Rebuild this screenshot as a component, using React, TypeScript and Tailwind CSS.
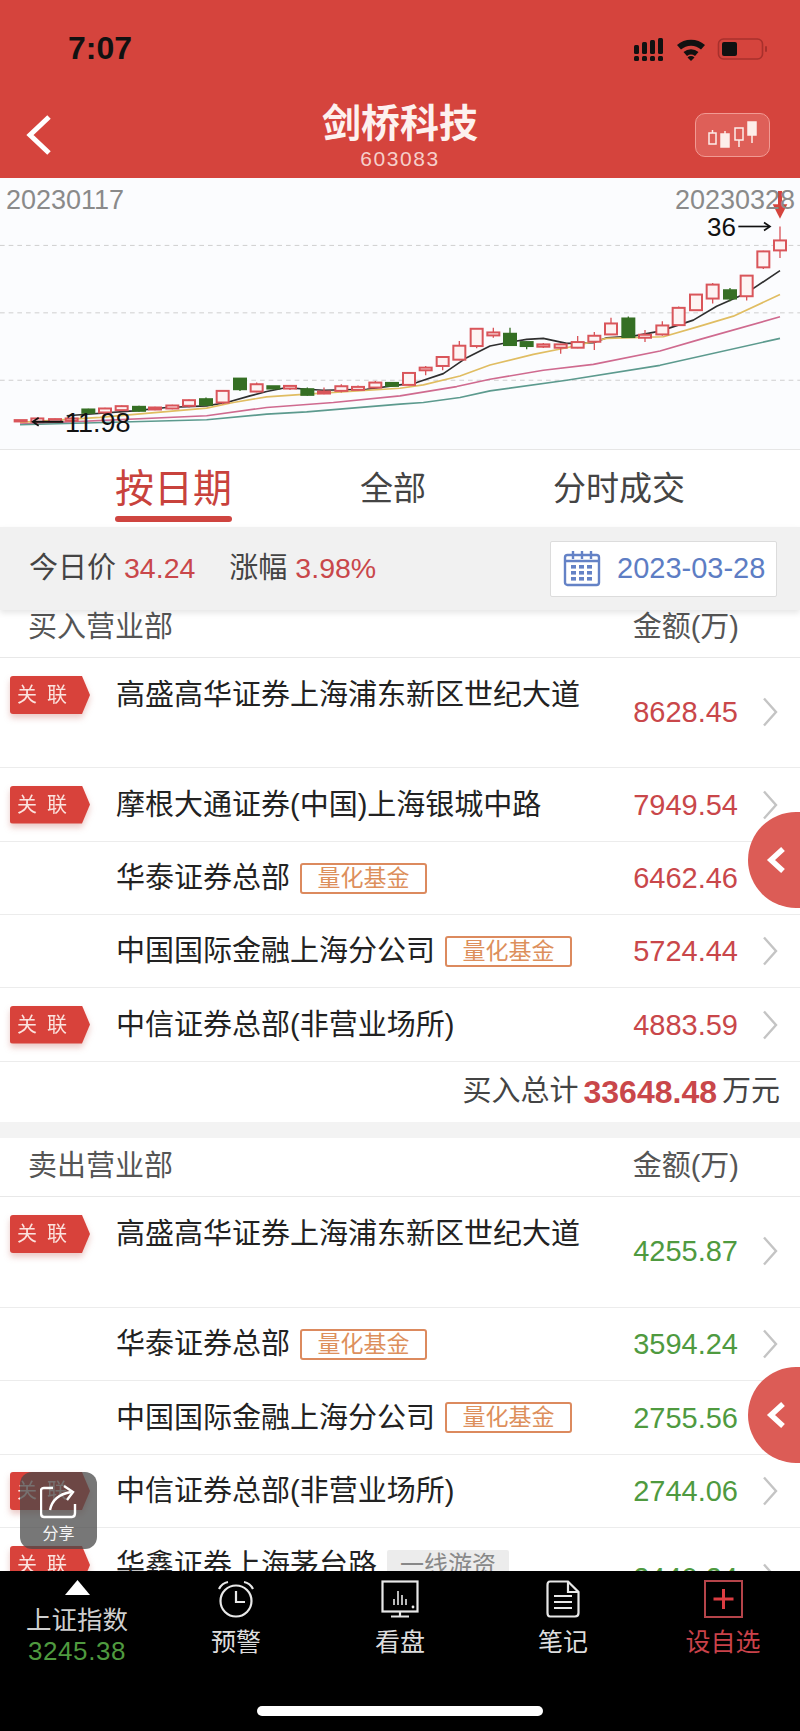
import React from "react";

const FONT = '"Liberation Sans", "Noto Sans CJK SC", sans-serif';

type Candle = [number, number, number, number, number, "r" | "g"];

// x, body top, body bottom, wick top, wick bottom, colour (chart units: 3 per px)
const CANDLES: Candle[] = [
  [62, 738, 742, 738, 742, "r"],
  [112, 733, 743, 731, 748, "r"],
  [165, 735, 742, 733, 744, "r"],
  [215, 733, 740, 731, 742, "r"],
  [265, 706, 716, 704, 718, "g"],
  [315, 703, 715, 701, 718, "r"],
  [365, 696, 708, 694, 710, "r"],
  [417, 698, 710, 695, 713, "g"],
  [465, 700, 706, 698, 708, "r"],
  [517, 694, 703, 692, 705, "r"],
  [567, 678, 695, 676, 700, "r"],
  [618, 675, 692, 670, 694, "g"],
  [668, 650, 685, 648, 690, "r"],
  [720, 613, 645, 611, 650, "g"],
  [770, 630, 652, 625, 654, "r"],
  [820, 636, 643, 635, 646, "g"],
  [870, 635, 643, 632, 647, "r"],
  [922, 645, 662, 640, 665, "g"],
  [972, 652, 658, 640, 660, "r"],
  [1024, 636, 650, 630, 655, "r"],
  [1074, 638, 647, 634, 649, "r"],
  [1126, 625, 640, 620, 642, "r"],
  [1176, 626, 635, 623, 637, "g"],
  [1227, 596, 632, 594, 634, "r"],
  [1277, 580, 588, 575, 603, "r"],
  [1328, 548, 575, 546, 588, "r"],
  [1378, 514, 556, 500, 558, "r"],
  [1430, 463, 515, 461, 522, "r"],
  [1480, 474, 483, 460, 490, "r"],
  [1530, 478, 512, 460, 514, "g"],
  [1580, 503, 515, 501, 525, "g"],
  [1630, 510, 517, 506, 521, "r"],
  [1682, 510, 520, 508, 538, "r"],
  [1733, 503, 520, 485, 522, "r"],
  [1783, 484, 502, 473, 527, "r"],
  [1833, 447, 480, 430, 482, "r"],
  [1885, 432, 488, 426, 490, "g"],
  [1935, 481, 490, 467, 503, "r"],
  [1987, 453, 480, 440, 484, "r"],
  [2036, 400, 452, 396, 454, "r"],
  [2088, 360, 407, 358, 409, "r"],
  [2138, 330, 372, 325, 387, "r"],
  [2190, 347, 372, 340, 380, "g"],
  [2240, 303, 365, 301, 378, "r"],
  [2290, 230, 278, 228, 283, "r"],
  [2340, 197, 227, 155, 250, "r"],
];

const MA_LINES: { color: string; points: string }[] = [
  {
    color: "#2f2f2f",
    points:
      "200,725 400,710 500,700 620,695 680,685 750,665 800,652 860,640 920,645 970,648 1100,645 1200,632 1250,625 1330,598 1400,550 1470,515 1520,505 1580,495 1630,492 1700,507 1780,505 1820,490 1900,485 1980,470 2080,437 2150,395 2240,355 2340,288",
  },
  {
    color: "#e0bd62",
    points:
      "60,745 300,730 620,702 700,685 800,668 920,660 1200,642 1270,632 1380,605 1470,572 1600,540 1700,520 1820,492 1990,487 2100,455 2200,425 2340,360",
  },
  {
    color: "#cf6a8f",
    points:
      "60,750 620,725 800,700 1000,685 1200,665 1370,637 1470,615 1630,588 1780,570 1980,530 2100,495 2340,427",
  },
  {
    color: "#5c9a8e",
    points:
      "60,752 620,737 800,720 920,713 1200,690 1270,685 1380,670 1470,650 1700,618 1980,573 2340,492",
  },
];

function KLine() {
  return (
    <svg className="absolute inset-0 h-full w-full" viewBox="0 9 2400 816" preserveAspectRatio="none">
      {[212, 415, 618].map((y) => (
        <line key={y} x1="0" x2="2400" y1={y} y2={y} stroke="#cfcfcf" strokeWidth="3" strokeDasharray="14 12" />
      ))}
      {MA_LINES.map((l) => (
        <polyline key={l.color} points={l.points} fill="none" stroke={l.color} strokeWidth="5" strokeLinejoin="round" />
      ))}
      {CANDLES.map(([x, top, bottom, wickTop, wickBottom, c]) => {
        const color = c === "r" ? "#d9555a" : "#356f24";
        return (
          <g key={x}>
            <line x1={x} x2={x} y1={wickTop} y2={wickBottom} stroke={color} strokeWidth="4" />
            <rect
              x={x - 18}
              y={top}
              width="36"
              height={bottom - top}
              fill={c === "r" ? "#fdf3f3" : color}
              stroke={color}
              strokeWidth="6"
            />
          </g>
        );
      })}
      {/* price markers */}
      <line x1="100" x2="190" y1="743" y2="743" stroke="#111" strokeWidth="6" />
      <polyline points="116,731 98,743 116,755" fill="none" stroke="#111" strokeWidth="5" />
      <line x1="2215" x2="2308" y1="155" y2="155" stroke="#111" strokeWidth="5" />
      <polyline points="2292,143 2310,155 2292,167" fill="none" stroke="#111" strokeWidth="5" />
      <line x1="2340" x2="2340" y1="48" y2="110" stroke="#d5443d" strokeWidth="12" />
      <polygon points="2318,88 2362,88 2340,132" fill="#d5443d" />
    </svg>
  );
}

function Chevron({ className }: { className: string }) {
  return (
    <svg className={className} viewBox="0 0 16 30" fill="none">
      <polyline points="2,1.5 14,15 2,28.5" stroke="#c4c4c4" strokeWidth="2.4" />
    </svg>
  );
}

function LinkBadge() {
  return (
    <div className="h-[38px] w-[80px] drop-shadow-[0_4px_3px_rgba(180,60,50,0.28)]">
      <div className="flex h-full w-full items-center rounded-l-[3px] bg-[#d8423b] pl-[7px] text-[20px] leading-none text-[#fbe3df] [clip-path:polygon(0_0,90%_0,100%_50%,90%_100%,0_100%)]">
        <span>关</span>
        <span className="ml-[10px]">联</span>
      </div>
    </div>
  );
}

function QuantTag() {
  return (
    <span className="flex h-[31px] w-[127px] shrink-0 items-center justify-center rounded-[3px] border-2 border-[#dc8a5e] text-[23px] leading-none text-[#dd8f5c]">
      量化基金
    </span>
  );
}

function HotMoneyTag() {
  return (
    <span className="flex h-[31px] w-[122px] shrink-0 items-center justify-center rounded-[2px] bg-[#ececec] text-[24px] leading-none text-[#888]">
      一线游资
    </span>
  );
}

type RowProps = {
  name: string;
  value: string;
  color: string;
  badge?: boolean;
  tag?: React.ReactNode;
  tall?: string;
  height?: string;
  valueTop?: string;
  chevronTop?: string;
};

function Row({
  name,
  value,
  color,
  badge,
  tag,
  tall,
  height = "h-[73px]",
  valueTop = "pt-[36px]",
  chevronTop = "mt-[39px]",
}: RowProps) {
  if (tall) {
    return (
      <div className={`flex ${tall} items-start border-b border-[#ececec]`}>
        <div className="w-[116px] shrink-0 pl-[10px] pt-[18px]">{badge && <LinkBadge />}</div>
        <div className="flex flex-1 items-center gap-[10px] pt-[16px] text-[29px] leading-[42px] text-[#222]">
          <span>{name}</span>
          {tag}
        </div>
        <div className={`${valueTop} text-[29px] leading-[36px] ${color}`}>{value}</div>
        <Chevron className={`ml-[24px] mr-[22px] ${chevronTop} h-[30px] w-[16px] shrink-0`} />
      </div>
    );
  }
  return (
    <div className={`flex ${height} items-center border-b border-[#ececec]`}>
      <div className="w-[116px] shrink-0 pl-[10px]">{badge && <LinkBadge />}</div>
      <div className="flex flex-1 items-center gap-[10px] text-[29px] leading-[42px] text-[#222]">
        <span>{name}</span>
        {tag}
      </div>
      <div className={`text-[29px] leading-[36px] ${color}`}>{value}</div>
      <Chevron className="ml-[24px] mr-[22px] h-[30px] w-[16px] shrink-0" />
    </div>
  );
}

function SectionHead({ title, className }: { title: string; className: string }) {
  return (
    <div className={`flex items-center justify-between border-b border-[#e8e8e8] pl-[28px] pr-[61px] text-[29px] text-[#555] ${className}`}>
      <span>{title}</span>
      <span>金额(万)</span>
    </div>
  );
}

function SideTab({ className }: { className: string }) {
  return (
    <div className={`absolute right-0 flex h-[96px] w-[52px] items-center rounded-l-full bg-[#dc5c56] pl-[18px] ${className}`}>
      <svg className="h-[28px] w-[20px]" viewBox="0 0 20 28" fill="none">
        <polyline points="17,3 5,14 17,25" stroke="#fff" strokeWidth="5.5" />
      </svg>
    </div>
  );
}

function TabItem({ label, children, color = "text-[#dedede]", width }: { label: string; children: React.ReactNode; color?: string; width: string }) {
  return (
    <div className={`flex flex-col items-center ${width}`}>
      <div className="flex h-[38px] items-center">{children}</div>
      <div className={`mt-[9px] text-[25px] leading-[30px] ${color}`}>{label}</div>
    </div>
  );
}

export default function App() {
  const red = "text-[#c9474a]";
  const green = "text-[#4f9a3f]";
  return (
    <div className="relative flex h-[1731px] w-[800px] flex-col overflow-hidden bg-white" style={{ fontFamily: FONT }}>
      {/* header */}
      <header className="h-[178px] shrink-0 bg-[#d5443d]">
        <div className="flex h-[95px] items-center justify-between pl-[68px] pr-[32px]">
          <span className="text-[32px] font-bold leading-none text-[#111]">7:07</span>
          <svg className="h-[26px] w-[135px]" viewBox="0 0 135 26">
            {[[1, 10], [9, 7], [17, 5], [25, 3]].map(([x, top]) => (
              <g key={x} fill="#111">
                <rect x={x} y={top} width="5" height={19 - top} rx="1.5" />
                <rect x={x} y="21" width="5" height="5" rx="1.5" />
              </g>
            ))}
            <path d="M44 10 A21 21 0 0 1 72 10 L68 14.5 A15 15 0 0 0 48 14.5 Z" fill="#111" />
            <path d="M50.5 17 A12 12 0 0 1 65.5 17 L62 21 A7 7 0 0 0 54 21 Z" fill="#111" />
            <path d="M58 26 L54.5 22.5 A5 5 0 0 1 61.5 22.5 Z" fill="#111" />
            <rect x="85.5" y="4" width="44" height="20" rx="5" fill="none" stroke="#a8302c" strokeWidth="1.6" />
            <rect x="89" y="7" width="15" height="14" rx="2" fill="#111" />
            <rect x="132" y="11" width="2" height="6" rx="1" fill="#a8302c" />
          </svg>
        </div>
        <div className="flex">
          <div className="w-[120px] pl-[25px] pt-[20px]">
            <svg className="h-[40px] w-[27px]" viewBox="0 0 27 40" fill="none">
              <polyline points="24,2 5,20 24,38" stroke="#fff" strokeWidth="5" />
            </svg>
          </div>
          <div className="flex flex-1 flex-col items-center pt-[9px]">
            <div className="text-[39px] font-bold leading-[40px] text-[#fdf1ef]">剑桥科技</div>
            <div className="mt-[3px] text-[21px] leading-[24px] tracking-[1.6px] text-[#f6cfca]">603083</div>
          </div>
          <div className="flex w-[120px] justify-end pr-[30px] pt-[18px]">
            <div className="flex h-[44px] w-[75px] items-center justify-center rounded-[10px] border border-[#f19a93] bg-[#de5f58]">
              <svg className="h-[30px] w-[52px]" viewBox="0 0 52 30" fill="none" stroke="#fdeeea" strokeWidth="1.5">
                <rect x="2" y="13" width="7" height="11" />
                <line x1="5.5" x2="5.5" y1="10" y2="13" />
                <rect x="14" y="14" width="8" height="13" fill="#fdeeea" />
                <line x1="18" x2="18" y1="11" y2="14" />
                <rect x="28" y="8" width="8" height="12" />
                <line x1="32" x2="32" y1="20" y2="27" />
                <rect x="41" y="2" width="8" height="13" fill="#fdeeea" />
                <line x1="45" x2="45" y1="15" y2="23" />
              </svg>
            </div>
          </div>
        </div>
      </header>

      {/* kline chart */}
      <section className="relative h-[272px] shrink-0 border-b border-[#e6e6e6] bg-[#fbfcfe]">
        <KLine />
        <span className="absolute left-[6px] top-[6px] text-[27px] leading-[32px] text-[#8a8a8a]">20230117</span>
        <span className="absolute left-[675px] top-[6px] text-[27px] leading-[32px] text-[#8a8a8a]">20230328</span>
        <span className="absolute left-[707px] top-[33px] text-[26px] leading-[32px] text-[#111]">36</span>
        <span className="absolute left-[65px] top-[229px] text-[27px] leading-[32px] text-[#111]">11.98</span>
      </section>

      {/* view switch */}
      <nav className="flex h-[77px] shrink-0 items-start bg-white">
        <div className="ml-[115px] flex flex-col items-center pt-[16px]">
          <span className="text-[39px] leading-[46px] text-[#c8423c]">按日期</span>
          <span className="mt-[4px] h-[6px] w-[117px] rounded-full bg-[#cf4540]" />
        </div>
        <span className="ml-[128px] pt-[19px] text-[33px] leading-[40px] text-[#444]">全部</span>
        <span className="ml-[127px] pt-[19px] text-[33px] leading-[40px] text-[#444]">分时成交</span>
      </nav>

      {/* quote and date */}
      <div className="relative z-10 flex h-[83px] shrink-0 items-center bg-[#f1f1f1] pl-[29px] pr-[23px] text-[29px] shadow-[0_3px_6px_rgba(0,0,0,0.1)]">
        <span className="text-[#444]">今日价</span>
        <span className={`ml-[8px] text-[28.5px] ${red}`}>34.24</span>
        <span className="ml-[34px] text-[#444]">涨幅</span>
        <span className={`ml-[8px] text-[28.5px] ${red}`}>3.98%</span>
        <div className="ml-auto flex h-[56px] w-[227px] items-center rounded-[2px] border border-[#dcdcdc] bg-white pl-[12px] text-[29px] text-[#5d7dc4]">
          <svg className="h-[37px] w-[38px] shrink-0" viewBox="0 0 38 37" fill="none" stroke="#6482c6" strokeWidth="2.4">
            <rect x="2" y="5" width="34" height="30" rx="2.5" />
            <line x1="2" x2="36" y1="11" y2="11" />
            <line x1="10" x2="10" y1="1" y2="9" />
            <line x1="19" x2="19" y1="1" y2="9" />
            <line x1="28" x2="28" y1="1" y2="9" />
            <g fill="#6482c6" stroke="none">
              {[15, 21, 27].flatMap((y) =>
                [8, 16, 24].map((x) => <rect key={`${x}-${y}`} x={x} y={y} width="5" height="3.6" />),
              )}
            </g>
          </svg>
          <span className="ml-[16px]">2023-03-28</span>
        </div>
      </div>

      {/* trade lists */}
      <main className="relative min-h-0 flex-1 overflow-hidden">
        <SectionHead title="买入营业部" className="h-[48px] pb-[12px]" />
        <Row tall="h-[110px]" badge name="高盛高华证券上海浦东新区世纪大道" value="8628.45" color={red} />
        <Row badge name="摩根大通证券(中国)上海银城中路" value="7949.54" color={red} height="h-[74px]" />
        <Row tag={<QuantTag />} name="华泰证券总部" value="6462.46" color={red} />
        <Row tag={<QuantTag />} name="中国国际金融上海分公司" value="5724.44" color={red} />
        <Row badge name="中信证券总部(非营业场所)" value="4883.59" color={red} height="h-[74px]" />
        <div className="flex h-[60px] items-center justify-end pr-[20px] text-[29px] text-[#444]">
          <span>买入总计</span>
          <span className={`ml-[5px] text-[32px] font-bold ${red}`}>33648.48</span>
          <span className="ml-[5px]">万元</span>
        </div>
        <div className="h-[16px] bg-[#f3f3f3]" />
        <SectionHead title="卖出营业部" className="h-[59px]" />
        <Row tall="h-[111px]" badge name="高盛高华证券上海浦东新区世纪大道" value="4255.87" color={green} />
        <Row tag={<QuantTag />} name="华泰证券总部" value="3594.24" color={green} />
        <Row tag={<QuantTag />} name="中国国际金融上海分公司" value="2755.56" color={green} height="h-[74px]" />
        <Row badge name="中信证券总部(非营业场所)" value="2744.06" color={green} />
        <Row
          tall="h-[110px]"
          badge
          tag={<HotMoneyTag />}
          name="华鑫证券上海茅台路"
          value="2440.24"
          color={green}
          valueTop="pt-[32px]"
          chevronTop="mt-[35px]"
        />

        <SideTab className="top-[202px]" />
        <SideTab className="top-[757px]" />

        {/* floating share button */}
        <div className="absolute left-[20px] top-[862px] flex h-[77px] w-[77px] flex-col items-center rounded-[12px] bg-[#4a4a4a]/75 pt-[13px]">
          <svg className="h-[34px] w-[38px]" viewBox="0 0 38 34" fill="none" stroke="#fff" strokeWidth="2.4">
            <path d="M13 3 H4 Q1 3 1 6 V28 Q1 32 4 32 H32 Q35 32 35 28 V19" />
            <path d="M10 25 Q13 10 31 7" />
            <polyline points="24,1 33,7 27,15" />
          </svg>
          <span className="mt-[5px] text-[16px] leading-[20px] text-[#f4f4f4]">分享</span>
        </div>
      </main>

      {/* bottom bar */}
      <footer className="relative flex h-[160px] shrink-0 flex-col bg-black">
        <div className="flex items-start pt-[9px]">
          <div className="ml-[27px] flex w-[100px] flex-col items-center">
            <svg className="h-[15px] w-[25px]" viewBox="0 0 25 15">
              <polygon points="12.5,0 25,15 0,15" fill="#fff" />
            </svg>
            <span className="mt-[10px] whitespace-nowrap text-[25.5px] leading-[30px] text-[#cfcfcf]">上证指数</span>
            <span className={`text-[26px] leading-[32px] tracking-[0.6px] ${green}`}>3245.38</span>
          </div>
          <div className="ml-[79px]">
            <TabItem label="预警" width="w-[60px]">
              <svg className="h-[38px] w-[38px]" viewBox="0 0 38 38" fill="none" stroke="#e8e8e8" strokeWidth="2.2">
                <circle cx="19" cy="21" r="15.5" />
                <polyline points="19,11 19,22 28,22" />
                <path d="M2 9 Q5 3 11 2 M36 9 Q33 3 27 2" />
              </svg>
            </TabItem>
          </div>
          <div className="ml-[104px]">
            <TabItem label="看盘" width="w-[60px]">
              <svg className="h-[38px] w-[38px]" viewBox="0 0 38 38" fill="none" stroke="#e8e8e8" strokeWidth="2.2">
                <rect x="1.5" y="1.5" width="35" height="30" />
                <path d="M19 32 V36 M10 36.5 H28" />
                <path d="M13 25 V19 M17 25 V11 M21 25 V15 M25 25 V19" strokeWidth="1.6" />
                <circle cx="32" cy="27" r="1.4" fill="#e8e8e8" stroke="none" />
              </svg>
            </TabItem>
          </div>
          <div className="ml-[103px]">
            <TabItem label="笔记" width="w-[60px]">
              <svg className="h-[38px] w-[34px]" viewBox="0 0 34 38" fill="none" stroke="#e8e8e8" strokeWidth="2.2">
                <path d="M4 1.5 H22 L32.5 12 V33 Q32.5 36.5 29 36.5 H4 Q1.5 36.5 1.5 33 V5 Q1.5 1.5 4 1.5 Z" />
                <path d="M22 1.5 V12 H32.5" />
                <path d="M8 16 H26 M8 22 H26 M8 28 H26" />
              </svg>
            </TabItem>
          </div>
          <div className="ml-[92px]">
            <TabItem label="设自选" color="text-[#c9424a]" width="w-[76px]">
              <svg className="h-[38px] w-[39px]" viewBox="0 0 39 38" fill="none">
                <rect x="1" y="1" width="37" height="36" stroke="#b5444a" strokeWidth="2" />
                <path d="M19.5 9 V29 M9.5 19 H29.5" stroke="#dc3d42" strokeWidth="3" />
              </svg>
            </TabItem>
          </div>
        </div>
        <div className="absolute bottom-[15px] left-[257px] h-[10px] w-[286px] rounded-full bg-white" />
      </footer>
    </div>
  );
}
